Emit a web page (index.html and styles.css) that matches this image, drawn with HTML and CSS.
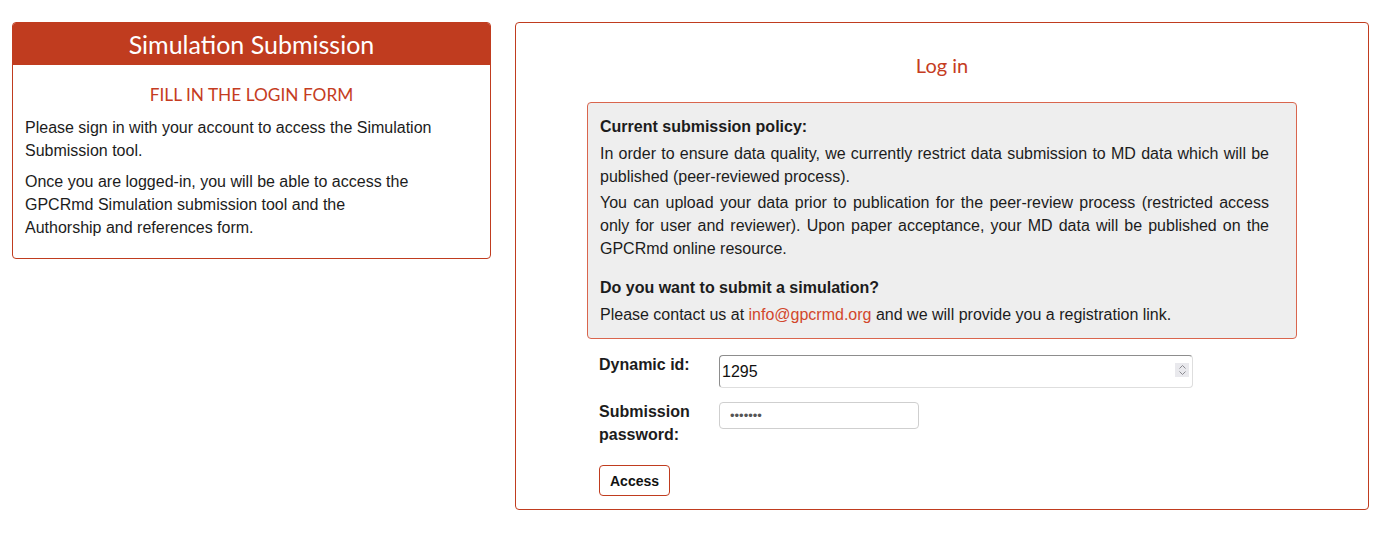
FILE: index.html
```html
<!DOCTYPE html>
<html lang="en">
<head>
<meta charset="utf-8">
<title>Simulation Submission</title>
<link rel="stylesheet" href="styles.css">
</head>
<body>
<div class="page">
  <div class="side-panel">
    <div class="side-head">Simulation Submission</div>
    <div class="side-body">
      <h3 class="side-sub">FILL IN THE LOGIN FORM</h3>
      <p>Please sign in with your account to access the Simulation Submission tool.</p>
      <p>Once you are logged-in, you will be able to access the GPCRmd Simulation submission tool and the<br>Authorship and references form.</p>
    </div>
  </div>
  <div class="main-panel">
    <h2 class="main-title">Log in</h2>
    <div class="policy">
      <div class="policy-head">Current submission policy:</div>
      <p class="policy-p1">In order to ensure data quality, we currently restrict data submission to MD data which will be published (peer-reviewed process).</p>
      <p class="policy-p2">You can upload your data prior to publication for the peer-review process (restricted access only for user and reviewer). Upon paper acceptance, your MD data will be published on the GPCRmd online resource.</p>
      <div class="policy-head second">Do you want to submit a simulation?</div>
      <p class="policy-p3">Please contact us at <a href="#" class="mail">info@gpcrmd.org</a> and we will provide you a registration link.</p>
    </div>
    <form class="login-form">
      <label class="lbl lbl-id" for="dyn">Dynamic id:</label>
      <div class="num-wrap">
        <input id="dyn" class="in-id" type="text" value="1295">
        <span class="spin"><svg width="9" height="12" viewBox="0 0 9 12"><path d="M1.5 4.5 L4.5 1.5 L7.5 4.5" fill="none" stroke="#8a8a90" stroke-width="1"/><path d="M1.5 7.5 L4.5 10.5 L7.5 7.5" fill="none" stroke="#8a8a90" stroke-width="1"/></svg></span>
      </div>
      <label class="lbl lbl-pw" for="pw">Submission password:</label>
      <div class="pw-wrap"><input id="pw" class="in-pw" type="password" value="abcdefg"></div>
      <div class="btn-row"><button type="button" class="btn">Access</button></div>
    </form>
  </div>
</div>
</body>
</html>
```
FILE: styles.css
```css
html, body {
  margin: 0;
  padding: 0;
  background: #fff;
}
body {
  font-family: "Liberation Sans", Arial, sans-serif;
  font-size: 16px;
  line-height: 23px;
  color: #1c1c1c;
}
.page {
  display: flex;
  align-items: flex-start;
  gap: 24px;
  padding: 22px 25px 0 12px;
}
.side-panel {
  width: 479px;
  box-sizing: border-box;
  border: 1px solid #c03c1f;
  border-radius: 4px;
  overflow: hidden;
}
.side-head {
  background: #c03c1f;
  color: #fff;
  font-family: Lato, "Noto Sans", sans-serif;
  font-size: 25px;
  line-height: 42px;
  height: 42px;
  text-align: center;
}
.side-body {
  padding: 19px 12px 11px;
}
.side-sub {
  margin: 0 0 10px;
  font-family: Lato, "Noto Sans", sans-serif;
  font-weight: normal;
  font-size: 17.3px;
  line-height: 22px;
  color: #c53c22;
  text-align: center;
}
.side-body p {
  margin: 0 0 8px;
}
.main-panel {
  flex: 1;
  box-sizing: border-box;
  height: 488px;
  border: 1px solid #c03c1f;
  border-radius: 4px;
  padding: 30px 71px 0;
}
.main-title {
  margin: 0 0 25px;
  font-family: Lato, "Noto Sans", sans-serif;
  font-weight: normal;
  font-size: 20px;
  line-height: 24px;
  color: #c53c22;
  text-align: center;
}
.policy {
  background: #eeeeee;
  border: 1px solid #d9654d;
  border-radius: 4px;
  padding: 12px 27px 12px 12px;
  text-align: justify;
}
.policy-head {
  font-weight: bold;
  margin: 0 0 4px;
}
.policy-head.second {
  margin-top: 16px;
}
.policy p {
  margin: 0;
}
.policy-p1 {
  margin-bottom: 3px !important;
}
.mail {
  color: #d2472b;
  text-decoration: none;
}
.login-form {
  display: grid;
  grid-template-columns: 120px 474px;
  row-gap: 12px;
  padding: 14px 12px 0;
}
.lbl {
  font-weight: bold;
  width: 100px;
}
.num-wrap, .pw-wrap {
  position: relative;
  padding-top: 2px;
}
.in-id {
  box-sizing: border-box;
  width: 474px;
  height: 33px;
  margin: 0;
  padding: 1px 2px 0;
  font-family: "Liberation Sans", Arial, sans-serif;
  font-size: 16px;
  color: #111;
  border: 1px solid #dedede;
  border-top-color: #8d8d8d;
  border-left-color: #8d8d8d;
  border-radius: 4px;
  background: #fff;
  outline: none;
}
.spin {
  position: absolute;
  right: 4px;
  top: 10px;
  width: 14px;
  height: 14px;
  background: #e9e9ed;
  display: flex;
  align-items: center;
  justify-content: center;
}
.in-pw {
  box-sizing: border-box;
  width: 200px;
  height: 27px;
  margin: 0;
  padding: 0 10px;
  font-family: "Liberation Sans", Arial, sans-serif;
  font-size: 13px;
  color: #555;
  border: 1px solid #cfcfcf;
  border-radius: 4px;
  background: #fff;
  outline: none;
}
.btn-row {
  grid-column: 1 / 3;
  padding-top: 7px;
}
.btn {
  box-sizing: border-box;
  height: 31px;
  padding: 0 10px;
  border: 1px solid #c03c1f;
  border-radius: 4px;
  background: #fff;
  font-family: "Liberation Sans", Arial, sans-serif;
  font-weight: bold;
  font-size: 14px;
  color: #111;
}
```
